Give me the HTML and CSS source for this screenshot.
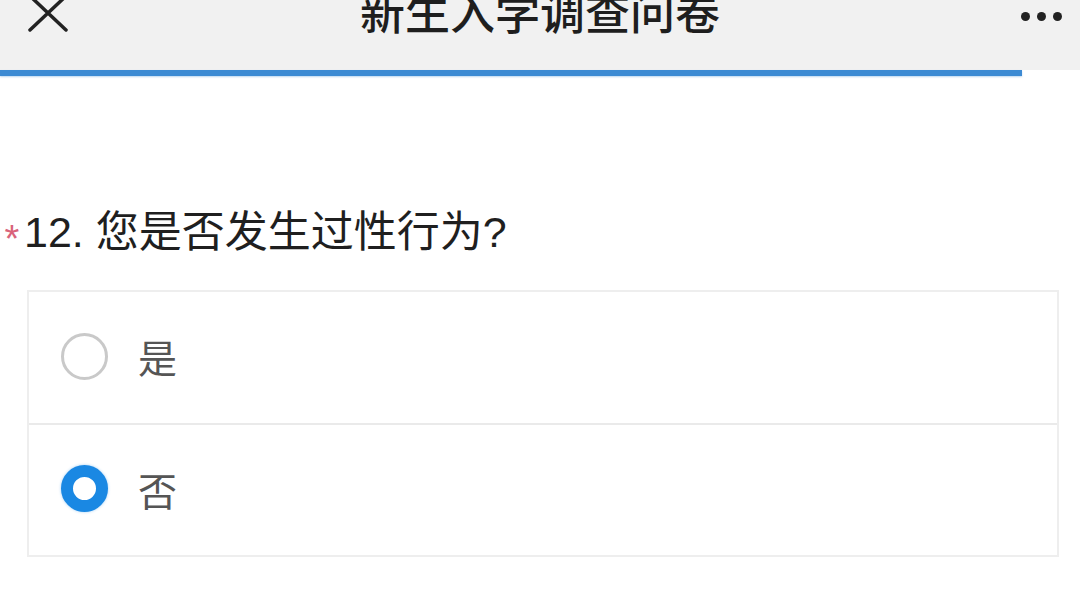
FILE: index.html
```html
<!DOCTYPE html>
<html lang="zh">
<head>
<meta charset="utf-8">
<link rel="stylesheet" href="styles.css">
</head>
<body>
<div class="page">
  <header class="topbar">
    <svg class="close" width="42" height="34" viewBox="0 0 42 34"><path d="M3 -4 L39 30 M39 -4 L3 30" stroke="#222" stroke-width="3.5" fill="none" stroke-linecap="round"/></svg>
    <div class="title">新生入学调查问卷</div>
    <div class="more"><span></span><span></span><span></span></div>
  </header>
  <div class="progress"><div class="fill"></div></div>
  <main class="content">
    <div class="question"><span class="star">*</span>12. 您是否发生过性行为?</div>
    <div class="card">
      <div class="option">
        <span class="radio"></span>
        <span class="label">是</span>
      </div>
      <div class="option">
        <span class="radio checked"></span>
        <span class="label">否</span>
      </div>
    </div>
  </main>
</div>
</body>
</html>
```

FILE: styles.css
```css
html, body {
  margin: 0;
  padding: 0;
  background: #ffffff;
  font-family: "Liberation Sans", "Noto Sans CJK SC", sans-serif;
}
.page {
  width: 1080px;
  height: 614px;
  overflow: hidden;
}
.topbar {
  height: 70px;
  background: #f1f1f1;
  display: flex;
  align-items: flex-start;
  justify-content: space-between;
  padding: 0 18px 0 27px;
  box-sizing: border-box;
}
.close {
  display: block;
}
.title {
  font-family: "Noto Sans CJK SC", sans-serif;
  font-size: 45px;
  line-height: 45px;
  margin-top: -12px;
  font-weight: 500;
  color: #1e1e1e;
  margin-left: -10px;
}
.more {
  display: flex;
  gap: 7px;
  margin-top: 12px;
}
.more span {
  width: 9px;
  height: 9px;
  border-radius: 50%;
  background: #222;
}
.progress {
  height: 6px;
  background: #ffffff;
}
.progress .fill {
  width: 1022px;
  height: 6px;
  background: #3c8ad3;
  box-shadow: 0 1px 2px rgba(60,138,211,0.35);
}
.content {
  padding: 0 22px 0 0;
}
.question {
  margin-top: 131px;
  font-size: 43px;
  line-height: 50px;
  color: #1f1f1f;
  display: flex;
  align-items: center;
}
.star {
  color: #d9637a;
  font-size: 38px;
  width: 24px;
  text-align: center;
  padding-top: 14px;
  line-height: 36px;
}
.card {
  margin: 33px 0 0 27px;
  border: 2px solid #eeeeee;
  width: 1032px;
  box-sizing: border-box;
}
.option {
  height: 131px;
  display: flex;
  align-items: center;
  padding-left: 32px;
  padding-bottom: 3px;
  box-sizing: border-box;
}
.option + .option {
  border-top: 2px solid #eaeaea;
  height: 132px;
}
.radio {
  width: 47px;
  height: 47px;
  border-radius: 50%;
  border: 3px solid #c9c9c9;
  box-sizing: border-box;
  background: #fff;
}
.radio.checked {
  border: 12px solid #1a88e3;
  box-shadow: 0 0 3px rgba(26,136,227,0.4);
}
.label {
  margin-left: 30px;
  font-family: "Noto Sans CJK SC", sans-serif;
  font-size: 39px;
  color: #555555;
  line-height: 40px;
}
```
